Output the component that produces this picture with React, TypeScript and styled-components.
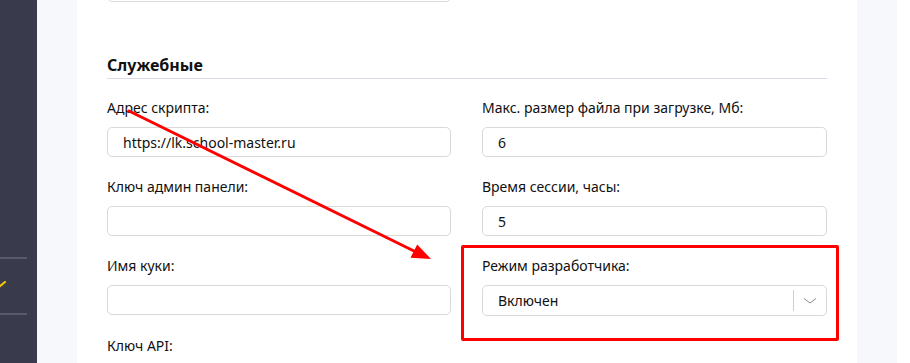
import React from "react";
import styled, { createGlobalStyle } from "styled-components";

const Global = createGlobalStyle`
  html, body { margin: 0; padding: 0; background: #ffffff; overflow: hidden; }
  body { font-family: "Noto Sans", "Open Sans", sans-serif; color: #111; }
  * { box-sizing: border-box; }
`;

const Page = styled.div`
  position: relative;
  display: flex;
  width: 910px;
  height: 363px;
  overflow: hidden;
`;

const Sidebar = styled.aside`
  width: 37px;
  flex: none;
  background: #393b4d;
  display: flex;
  flex-direction: column;
  padding-top: 257px;
`;

const SideRule = styled.div`
  width: 27px;
  height: 2px;
  background: #585a6b;
`;

const SideItem = styled.div`
  height: 54px;
  display: flex;
  align-items: center;
`;

const Main = styled.main`
  flex: none;
  width: 860px;
  background: #f7f8fc;
  padding: 0 40px;
`;

const Card = styled.section`
  background: #ffffff;
  height: 100%;
  padding: 0 30px;
  display: flow-root;
`;

const EdgeStrip = styled.div`
  flex: 1;
  background: #ffffff;
`;

const PrevInput = styled.div`
  width: 344px;
  height: 30px;
  margin-top: -28px;
  border: 1px solid #d9d9d9;
  border-radius: 5px;
`;

const Heading = styled.h2`
  margin: 52px 0 0;
  font-size: 16px;
  line-height: 22px;
  font-weight: 700;
  color: #111;
  padding-bottom: 2px;
  border-bottom: 1px solid #dcd9ec;
`;

const Grid = styled.div`
  display: grid;
  grid-template-columns: 344px 345px;
  column-gap: 31px;
  row-gap: 20px;
  padding-top: 19px;
`;

const Field = styled.div`
  position: relative;
  display: flex;
  flex-direction: column;
  gap: 9px;
`;

const Label = styled.label`
  font-size: 14px;
  line-height: 20px;
  color: #111;
`;

const Input = styled.div`
  flex: none;
  height: 30px;
  border: 1px solid #d9d9d9;
  border-radius: 5px;
  padding: 0 15px;
  display: flex;
  align-items: center;
  font-size: 14px;
  color: #111;
`;

const Select = styled.div`
  flex: none;
  height: 31px;
  border: 1px solid #d9d9d9;
  border-radius: 5px;
  padding-left: 15px;
  display: flex;
  align-items: center;
  font-size: 14px;
  color: #111;
`;

const SelectValue = styled.span`
  flex: 1;
`;

const Indicator = styled.div`
  width: 33px;
  align-self: stretch;
  display: flex;
  align-items: center;
  justify-content: center;
  position: relative;
  &::before {
    content: "";
    position: absolute;
    left: 0;
    top: 4px;
    bottom: 4px;
    width: 1px;
    background: #cfcfcf;
  }
`;

const Highlight = styled.div`
  position: absolute;
  left: -21px;
  top: -11px;
  width: 378px;
  height: 96px;
  border: 3px solid #ff0000;
  border-radius: 2px;
  pointer-events: none;
`;

const Overlay = styled.svg`
  position: absolute;
  left: 0;
  top: 0;
  pointer-events: none;
`;

type F = { label: string; value?: string; select?: boolean; mark?: boolean };

const fields: F[] = [
  { label: "Адрес скрипта:", value: "https://lk.school-master.ru" },
  { label: "Макс. размер файла при загрузке, Мб:", value: "6" },
  { label: "Ключ админ панели:", value: "" },
  { label: "Время сессии, часы:", value: "5" },
  { label: "Имя куки:", value: "" },
  { label: "Режим разработчика:", value: "Включен", select: true, mark: true },
  { label: "Ключ API:", value: "" },
];

export default function App() {
  return (
    <>
      <Global />
      <Page>
        <Sidebar>
          <SideRule />
          <SideItem>
            <svg width="8" height="10" viewBox="0 0 8 10">
              <path d="M-1 6 L5 1" stroke="#f5c400" strokeWidth="2.2" fill="none" strokeLinecap="round" />
            </svg>
          </SideItem>
          <SideRule />
        </Sidebar>
        <Main>
          <Card>
            <PrevInput />
            <Heading>Служебные</Heading>
            <Grid>
              {fields.map((f) => (
                <Field key={f.label}>
                  <Label>{f.label}</Label>
                  {f.select ? (
                    <Select>
                      <SelectValue>{f.value}</SelectValue>
                      <Indicator>
                        <svg width="14" height="8" viewBox="0 0 14 8">
                          <path d="M1 1.5 L7 6 L13 1.5" stroke="#8a8a8a" strokeWidth="1" fill="none" />
                        </svg>
                      </Indicator>
                    </Select>
                  ) : (
                    <Input>{f.value}</Input>
                  )}
                  {f.mark && <Highlight />}
                </Field>
              ))}
            </Grid>
          </Card>
        </Main>
        <EdgeStrip />
        <Overlay width="910" height="363" viewBox="0 0 910 363">
          <line x1="129" y1="111" x2="416" y2="252" stroke="#ff0000" strokeWidth="3" strokeLinecap="round" />
          <polygon points="431,259 410.5,257.8 417.2,244.4" fill="#ff0000" />
        </Overlay>
      </Page>
    </>
  );
}
